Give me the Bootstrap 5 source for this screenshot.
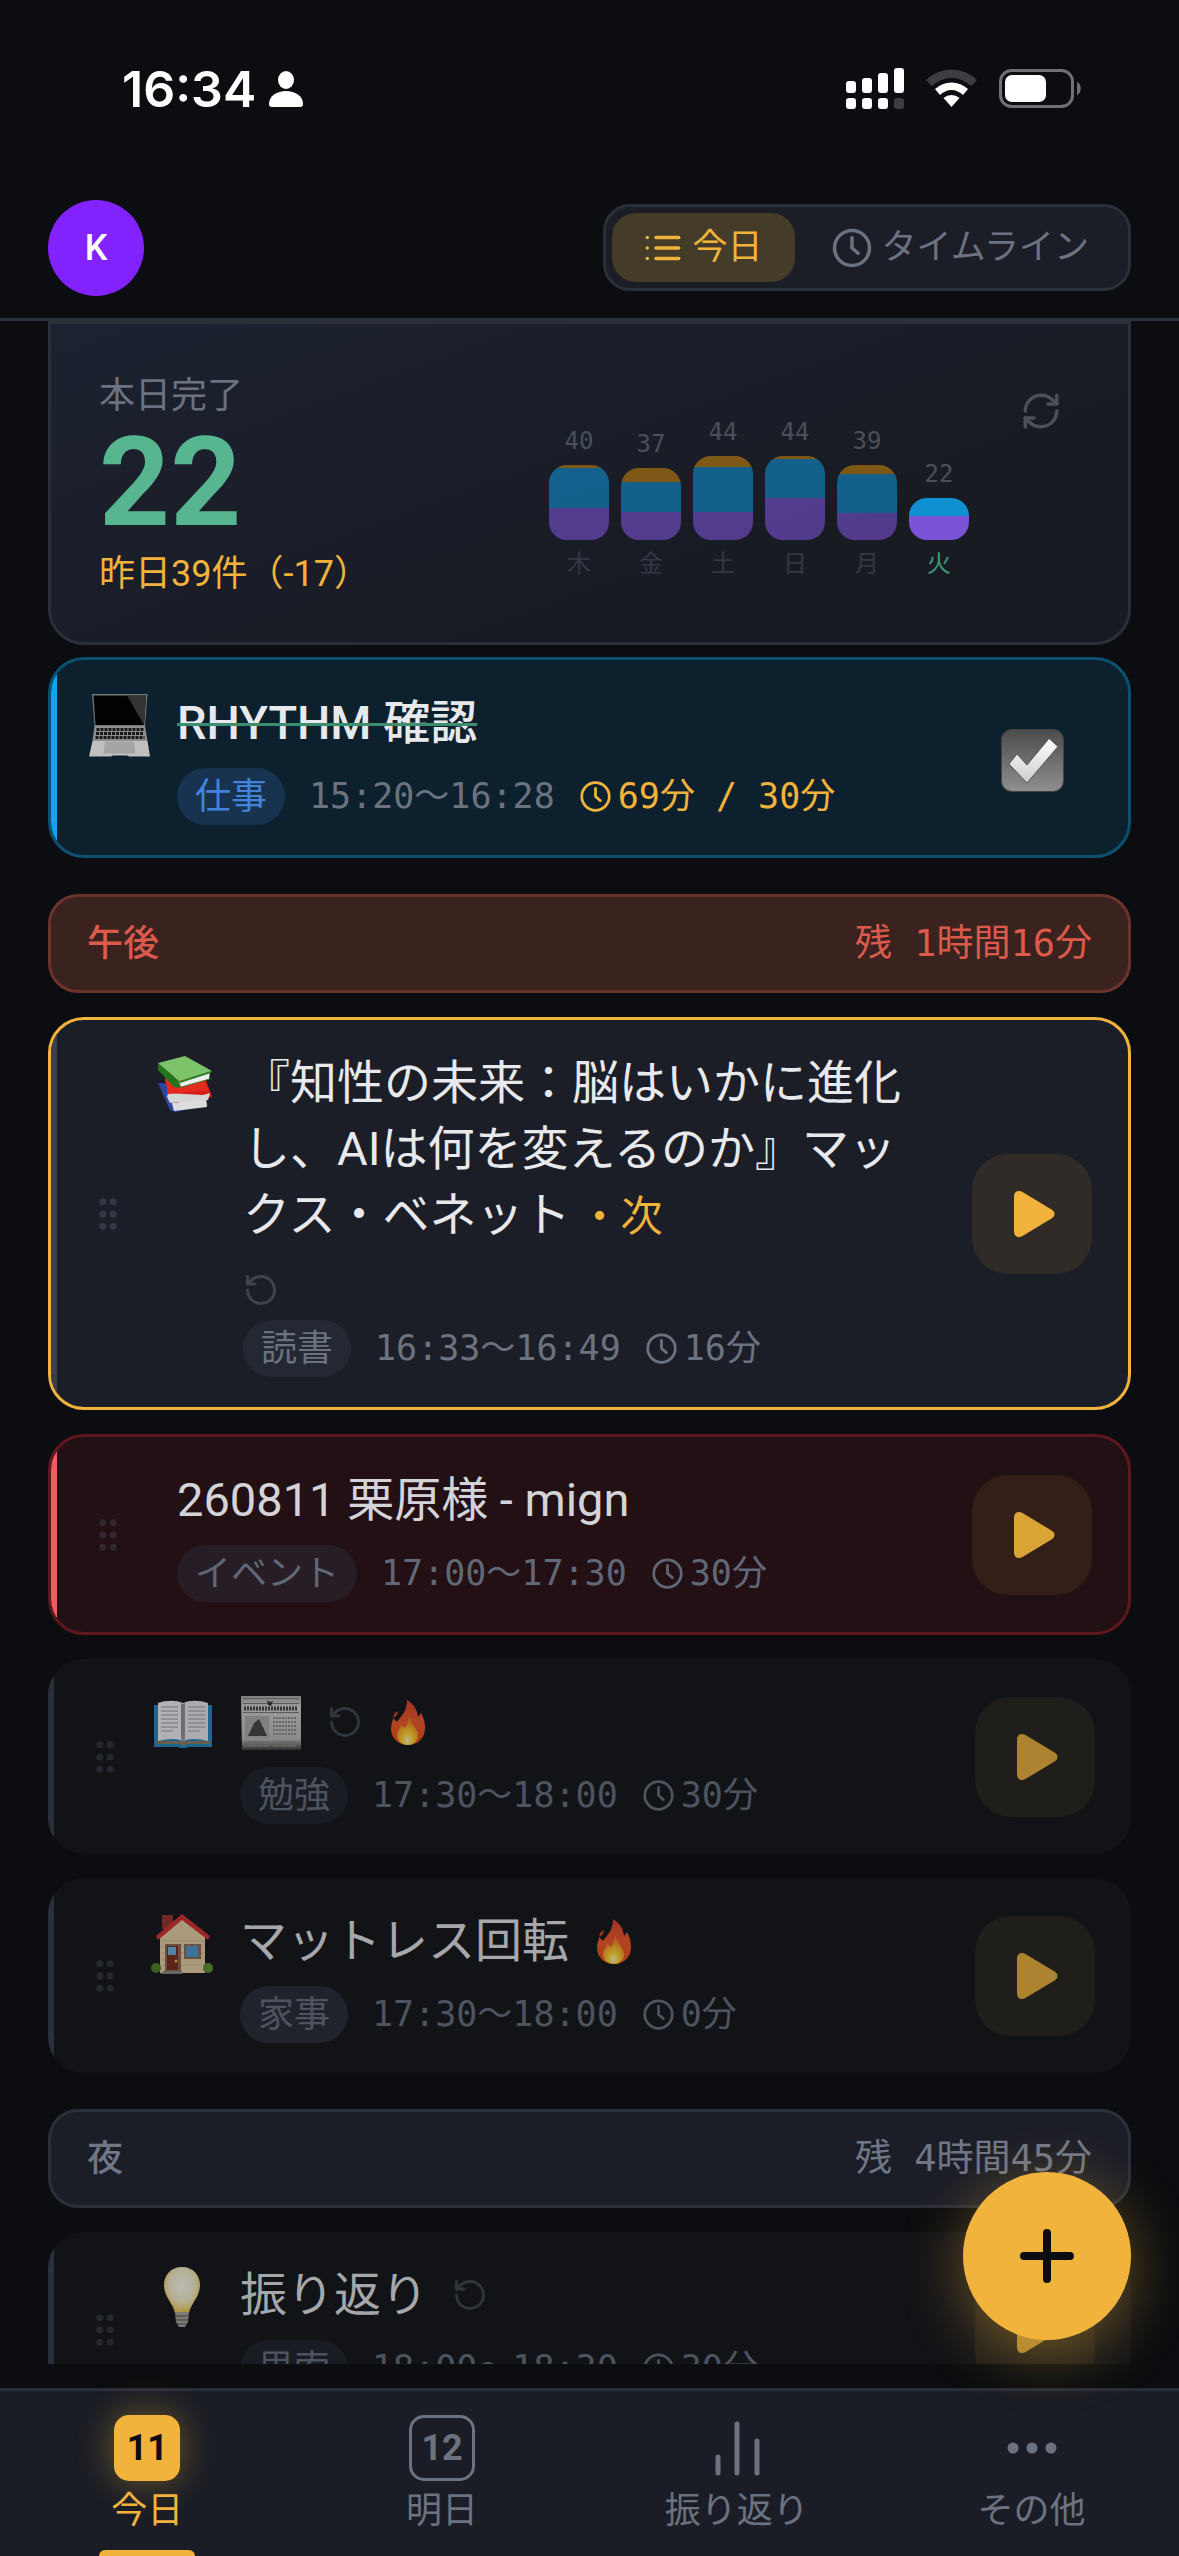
<!DOCTYPE html>
<html lang="ja">
<head>
<meta charset="utf-8">
<meta name="viewport" content="width=device-width, initial-scale=1">
<title>今日のタスク</title>
<link href="https://cdn.jsdelivr.net/npm/bootstrap@5.3.0/dist/css/bootstrap.min.css" rel="stylesheet">
<style>
:root{--ink:#e8e9ed;--muted:#6b7280;--amber:#f2b33d;--line:#2b2f3a;--panel:#1c1e27;--bg:#0b0d10}
body{background:var(--bg);color:var(--ink);font-family:Roboto,"Noto Sans CJK JP",sans-serif;font-size:36px;line-height:54px}
svg{display:block;flex:none;overflow:visible}
.ic{fill:none;stroke:currentColor;stroke-width:2;stroke-linecap:round;stroke-linejoin:round}
.i33{width:33px;height:33px}.i36{width:36px;height:36px}.i42{width:42px;height:42px}
.mono{font-family:"DejaVu Sans Mono","Noto Sans CJK JP",monospace}
.statusbar{height:177px;padding:0 98px 0 122px}
.clock{font-family:Inter,sans-serif;font-weight:600;font-size:50px;gap:12px}
.apphead{height:144px;padding:0 48px;border-bottom:3px solid var(--line)}
.avatar{width:96px;height:96px;background:#8122ff;color:#fff;font-weight:500;border:0}
.switcher{border:3px solid var(--line);border-radius:27px;background:var(--panel);padding:6px;gap:6px}
.switcher button{border:0;background:none;color:var(--muted);height:69px;padding:0 33px 0 30px;border-radius:24px;gap:8px;font-size:35px}
.switcher button.on{background:#453b29;color:var(--amber)}
.feed{padding:0 48px;margin-bottom:24px;min-height:0}
.stats{border:3px solid var(--line);border-radius:0 0 36px 36px;background:linear-gradient(160deg,#1c2230,#191b23 70%);padding:45px 48px 36px;margin-bottom:12px}
.caption-line{color:var(--muted)}
.total{font-size:124px;line-height:120px;font-weight:700;color:#57b58f}
.delta{color:var(--amber);line-height:63px}
.chart{gap:12px;padding-bottom:24px}
.daycol{width:60px;font-size:24px;line-height:36px;color:#4b4f5a;gap:6px}
.daycol .day{color:#343844}
.daycol.now .day{color:#3f9a77}
.stack{width:60px;border-radius:18px;overflow:hidden;opacity:.5}
.now .stack{opacity:.85}
.stack i{display:block}
.s1{background:#e29308}.s2{background:#0ea5f0}.s3{background:#8c5cf6}
.reload{border:0;background:none;padding:18px;color:#4b4f5a;margin:3px 0 0 33px}
.task{border:3px solid var(--line);border-radius:36px;background:var(--panel);padding:30px 36px;gap:24px;margin-bottom:24px;overflow:hidden;position:relative}
.task::before{content:"";position:absolute;left:0;top:0;bottom:0;width:6px;background:var(--bar)}
.grip{border:0;background:none;padding:0;color:#333845}
.emo{width:66px;height:66px}
.ttl{font-size:47px;line-height:66px;font-weight:400}
.headrow{column-gap:24px;row-gap:24px}
.meta{gap:24px;margin-top:12px;line-height:57px;font-size:35px;color:var(--muted)}
.tagchip{border-radius:29px;padding:0 18px;background:#242833;font-size:36px}
.dur{gap:6px}
.over{color:var(--amber)}
.strike{text-decoration:line-through 3px #3f8d6f}
.nxt{font-size:42px;line-height:42px;color:var(--amber)}
.again{color:#40434d}
.go{width:120px;height:120px;border:0;border-radius:36px;background:#302b27;color:var(--amber);margin-left:12px}
.done{border-color:#0c506f;background:#0d202d;--bar:#12a5ec}
.done .ttl{font-weight:500}
.done .tagchip{background:#17334f;color:#4283dc}
.done .go{background:none}
.next{border-color:var(--amber);--bar:#3a404c}
.alert-task{border-color:#5e171d;background:#221014;--bar:#f05b61}
.alert-task .ttl{color:#d4d4d8}
.alert-task .meta{color:#606776}.alert-task .tagchip{background:#271d24}
.alert-task .go{background:#341f18;color:#dba437}
.alert-task .grip{color:#332830}
.later{border:0;background:#121317;--bar:#2a2f39}
.later .emo,.later .fire{opacity:.72}
.later .ttl{color:#a6a7ab}
.later .meta{color:#4d535f}.later .tagchip{background:#191c23}.later .tagchip.home{background:#20232b}
.later .go{background:#201e1a;color:#ad8230}
.later .grip{color:#25282f}.later .again{color:#30343c}
.band{border:3px solid var(--line);border-radius:30px;background:var(--panel);color:#6f7686;padding:0 36px;height:99px;margin:36px 0 24px;font-weight:500}
.band .mono{font-size:37px;font-weight:400}
.band.hot{background:#3a221e;border-color:#6c332d;color:#db5a4c}
.fab{position:fixed;right:48px;bottom:216px;width:168px;height:168px;border:0;border-radius:50%;background:#f2b33d;color:var(--bg);box-shadow:0 12px 60px rgba(242,179,61,.4)}
.tabs{border-top:3px solid var(--line);background:#1a1d25;height:168px}
.tabs a{color:var(--muted);text-decoration:none;padding-top:24px;gap:6px;line-height:48px;position:relative}
.tabs a.on{color:var(--amber)}
.tabs a.on::after{content:"";position:absolute;bottom:0;width:96px;height:6px;border-radius:6px 6px 0 0;background:var(--amber)}
.datebox{width:66px;height:66px;border:3px solid currentColor;border-radius:15px;font-weight:700}
.on .datebox{background:var(--amber);box-shadow:0 0 36px rgba(242,179,61,.4)}
.on .datebox span{color:var(--bg)}
</style>
</head>
<body>
<svg width="0" height="0" class="position-absolute" aria-hidden="true">
<defs>
<linearGradient id="flame" x1="0" y1="0" x2="0" y2="1"><stop offset="0" stop-color="#d8402a"/><stop offset=".5" stop-color="#f0592a"/><stop offset="1" stop-color="#e8480f"/></linearGradient>
<radialGradient id="glow" cx=".5" cy=".85" r=".6"><stop offset="0" stop-color="#fff6c0"/><stop offset=".4" stop-color="#ffd52e"/><stop offset="1" stop-color="#f58a1f"/></radialGradient>
<linearGradient id="box" x1="0" y1="0" x2="0" y2="1"><stop offset="0" stop-color="#4c4c4c"/><stop offset="1" stop-color="#8f8f8f"/></linearGradient>
<linearGradient id="silver" x1="0" y1="0" x2="0" y2="1"><stop offset="0" stop-color="#fff"/><stop offset="1" stop-color="#ccc"/></linearGradient>
<linearGradient id="paper" x1="0" y1="0" x2="0" y2="1"><stop offset="0" stop-color="#a8a8a8"/><stop offset=".2" stop-color="#d2d2d2"/><stop offset=".8" stop-color="#b8b8b8"/><stop offset="1" stop-color="#3c3c3c"/></linearGradient>
<radialGradient id="bulb" cx=".5" cy=".4" r=".6"><stop offset="0" stop-color="#fdfcf0"/><stop offset=".6" stop-color="#f4ecc8"/><stop offset="1" stop-color="#f0c642"/></radialGradient>
<symbol id="clk" viewBox="0 0 24 24"><circle cx="12" cy="12" r="10"/><path d="M12 6v6l3.500 3"/></symbol>
<symbol id="grip" viewBox="0 0 24 24"><g fill="currentColor"><circle cx="9" cy="5" r="1"/><circle cx="9" cy="12" r="1"/><circle cx="9" cy="19" r="1"/><circle cx="15" cy="5" r="1"/><circle cx="15" cy="12" r="1"/><circle cx="15" cy="19" r="1"/></g></symbol>
<symbol id="loop" viewBox="0 0 24 24"><path d="M3 12a9 9 0 1 0 9-9 9.750 9.750 0 0 0-6.740 2.740L3 8"/><path d="M3 3v5h5"/></symbol>
<symbol id="play" viewBox="-4 0 46 48"><path d="M1 6.500C1 1.500 5.500-.5 9.500 2L38.500 19.500c4 2.500 4 6.500 0 9L9.500 46C5.500 48.500 1 46.500 1 41.500Z" fill="currentColor"/></symbol>
<symbol id="fire" viewBox="0 0 42 48"><path d="M20 2c8 5 10 10 11 17l3-4c3 5 4 10 4 15 0 10-7 17-17 17S4 40 4 31c0-5 2-8 2-11l4 4C14 18 20 14 20 2Z" fill="url(#flame)"/><path d="M11 13c-4 2-5 4-4 7l3-3Z" fill="#d8402a"/><path d="M22 17c0 8 8 12 9 19 1 6-4 11-10 11S9 43 10 36c1-5 4-5 4-9l4 3c3-4 4-8 4-13Z" fill="url(#glow)"/></symbol>
</defs>
</svg>

<div class="d-flex flex-column vh-100">
  <div class="statusbar d-flex align-items-center justify-content-between flex-shrink-0">
    <div class="clock d-flex align-items-center text-white"><span>16:34</span>
      <svg width="36" height="36" viewBox="0 0 36 36" fill="#fff"><ellipse cx="18" cy="9" rx="8" ry="9"/><path d="M1 33c0-8 8-13 17-13s17 5 17 13c0 2-1 3-3 3H4c-2 0-3-1-3-3Z"/></svg>
    </div>
    <svg width="235" height="42" viewBox="846 67 235 42" aria-label="電波・Wi-Fi・バッテリー">
      <g fill="#fff"><rect x="846" y="80" width="10" height="12" rx="3"/><rect x="862" y="77" width="10" height="15" rx="3"/><rect x="878" y="72" width="10" height="20" rx="3"/><rect x="894" y="67" width="10" height="25" rx="3"/><rect x="846" y="97" width="10" height="11" rx="3"/><rect x="862" y="97" width="10" height="11" rx="3"/><rect x="878" y="97" width="10" height="11" rx="3"/></g>
      <rect x="894" y="97" width="10" height="11" rx="3" fill="#3c3d41"/>
      <path d="M926 79a36 36 0 0 1 51 0l-6 6a28 28 0 0 0-39 0Z" fill="#3c3d41"/>
      <path d="M935 88a24 24 0 0 1 33 0l-5 6a16 16 0 0 0-23 0Z" fill="#fff"/><path d="M943.500 97a12 12 0 0 1 16 0l-8 9Z" fill="#fff"/>
      <rect x="1000.500" y="69.500" width="72" height="36" rx="11" fill="none" stroke="#707173" stroke-width="3"/><rect x="1005" y="74" width="41" height="27" rx="7" fill="#fff"/><path d="M1077 81c5 2 5 11 0 13Z" fill="#707173"/>
    </svg>
  </div>

  <header class="apphead d-flex align-items-center justify-content-between flex-shrink-0">
    <button type="button" class="avatar rounded-circle p-0">K</button>
    <div class="switcher d-flex" role="group">
      <button type="button" class="on d-flex align-items-center"><svg class="ic i42" viewBox="0 0 24 24"><path d="M8 6h13M8 12h13M8 18h13M3 6h.01M3 12h.01M3 18h.01"/></svg>今日</button>
      <button type="button" class="d-flex align-items-center"><svg class="ic i42"><use href="#clk"/></svg>タイムライン</button>
    </div>
  </header>

  <main class="feed flex-grow-1 overflow-hidden">
    <section class="stats d-flex align-items-start">
      <div class="me-auto">
        <div class="caption-line">本日完了</div>
        <div class="total">22</div>
        <div class="delta">昨日39件（-17）</div>
      </div>
      <div class="chart d-flex align-items-end align-self-end text-center">
        <div class="daycol d-flex flex-column mono"><span>40</span><div class="stack"><i class="s1" style="height:3px"></i><i class="s2" style="height:40px"></i><i class="s3" style="height:32px"></i></div><span class="day">木</span></div>
        <div class="daycol d-flex flex-column mono"><span>37</span><div class="stack"><i class="s1" style="height:14px"></i><i class="s2" style="height:30px"></i><i class="s3" style="height:28px"></i></div><span class="day">金</span></div>
        <div class="daycol d-flex flex-column mono"><span>44</span><div class="stack"><i class="s1" style="height:11px"></i><i class="s2" style="height:45px"></i><i class="s3" style="height:28px"></i></div><span class="day">土</span></div>
        <div class="daycol d-flex flex-column mono"><span>44</span><div class="stack"><i class="s1" style="height:3px"></i><i class="s2" style="height:39px"></i><i class="s3" style="height:42px"></i></div><span class="day">日</span></div>
        <div class="daycol d-flex flex-column mono"><span>39</span><div class="stack"><i class="s1" style="height:9px"></i><i class="s2" style="height:39px"></i><i class="s3" style="height:27px"></i></div><span class="day">月</span></div>
        <div class="daycol now d-flex flex-column mono"><span>22</span><div class="stack"><i class="s2" style="height:18px"></i><i class="s3" style="height:24px"></i></div><span class="day">火</span></div>
      </div>
      <button type="button" class="reload" aria-label="更新"><svg class="ic i42" viewBox="0 0 24 24"><path d="M3 12a9 9 0 0 1 9-9 9.750 9.750 0 0 1 6.740 2.740L21 8"/><path d="M21 3v5h-5"/><path d="M21 12a9 9 0 0 1-9 9 9.750 9.750 0 0 1-6.740-2.740L3 16"/><path d="M8 16H3v5"/></svg></button>
    </section>

    <article class="task done d-flex align-items-center">
      <svg class="emo align-self-start" viewBox="0 0 66 66"><path d="M5 4h55.500L58 36H7.500Z" fill="#777"/><path d="M6.500 5.500h52.500L57 35H8.500Z" fill="#020202"/><path d="M40 5.500h19L57 35Z" fill="#333"/><path d="M7.500 36h50.500l2.500 15h-55Z" fill="#8d8d8d"/><path d="M9.500 39.500h47M9 43.500h48M8.500 47.500h49" stroke="#181818" stroke-width="3" stroke-dasharray="3 1"/><path d="M5.500 51h55l2.500 15.500H42l-2-1H26l-2 1H2Z" fill="#c0c0c0"/><path d="M18 51.500h29l1.500 12H16.500Z" fill="#a5a5a5"/></svg>
      <div class="flex-grow-1">
        <div class="ttl"><span class="strike">RHYTHM 確認</span></div>
        <div class="meta mono d-flex"><span class="tagchip">仕事</span><span>15:20〜16:28</span><span class="dur over d-flex align-items-center"><svg class="ic i33"><use href="#clk"/></svg>69分 / 30分</span></div>
      </div>
      <button type="button" class="go d-flex align-items-center justify-content-center p-0" aria-label="完了済み"><svg width="63" height="69" viewBox="0 -6 63 69"><rect width="63" height="63" rx="11" fill="#444"/><rect x="1" y="1" width="61" height="61" rx="10" fill="url(#box)"/><path d="M8 35l8-10 10 11L48 9.500l9 8L26 54Z" fill="url(#silver)" stroke="#555" stroke-width="1"/></svg></button>
    </article>

    <div class="band hot d-flex align-items-center justify-content-between"><span>午後</span><span class="mono">残 1時間16分</span></div>

    <article class="task next d-flex align-items-center">
      <button type="button" class="grip" aria-label="並べ替え"><svg class="ic i42"><use href="#grip"/></svg></button>
      <svg class="emo align-self-start" viewBox="0 0 66 66"><path d="M5 33l12 27 5 2 33-7-9-20Z" fill="#2b479f"/><path d="M19 53l34-5 1 9-33 4Z" fill="#ddd"/><path d="M12 30l8 20 2 3 37-6-6-17Z" fill="#d41c15"/><path d="M14 47l1-4 35 2 7-2-2 7-38 3Z" fill="#d6d6d6"/><path d="M12 28l3 16 41-3-7-14Z" fill="#e32a1f"/><path d="M5 13l21 18 1 7-6-1L5 20Z" fill="#23761b"/><path d="M5 13L32 6l27 15-33 10Z" fill="#7cc369"/><path d="M26 31l31-9-1 7-28 8Z" fill="#eee"/><path d="M26 31l33-10-1 2-31 10ZM27 37l32-9-1 1-31 9Z" fill="#2b7d22"/></svg>
      <div class="flex-grow-1" style="flex-basis:0">
        <div class="headrow d-flex flex-wrap align-items-center"><div class="ttl">『知性の未来：脳はいかに進化し、AIは何を変えるのか』マックス・ベネット<span class="nxt ms-2">・次</span></div><svg class="ic i36 again"><use href="#loop"/></svg></div>
        <div class="meta mono d-flex"><span class="tagchip">読書</span><span>16:33〜16:49</span><span class="dur d-flex align-items-center"><svg class="ic i33"><use href="#clk"/></svg>16分</span></div>
      </div>
      <button type="button" class="go d-flex align-items-center justify-content-center p-0" aria-label="開始"><svg width="46" height="48"><use href="#play"/></svg></button>
    </article>

    <article class="task alert-task d-flex align-items-center">
      <button type="button" class="grip" aria-label="並べ替え"><svg class="ic i42"><use href="#grip"/></svg></button>
      <div class="flex-grow-1 ms-4">
        <div class="ttl">260811 栗原様 - mign</div>
        <div class="meta mono d-flex"><span class="tagchip">イベント</span><span>17:00〜17:30</span><span class="dur d-flex align-items-center"><svg class="ic i33"><use href="#clk"/></svg>30分</span></div>
      </div>
      <button type="button" class="go d-flex align-items-center justify-content-center p-0" aria-label="開始"><svg width="46" height="48"><use href="#play"/></svg></button>
    </article>

    <article class="task later d-flex align-items-center">
      <button type="button" class="grip" aria-label="並べ替え"><svg class="ic i42"><use href="#grip"/></svg></button>
      <svg class="emo align-self-start" viewBox="0 0 66 66"><path d="M4 16h58v42H38l-2 1h-6l-2-1H4Z" fill="#2687bd"/><path d="M7 52h53v3H36l-3 2-3-2H7Z" fill="#8d7b5c"/><path d="M8 14c9-3 18-3 25 0v38c-8-3-16-2-25 0Z" fill="#f0f0f4"/><path d="M33 14c7-3 16-3 25 0v38c-9-2-17-3-25 0Z" fill="#e6e6ec"/><path d="M31 14l2 1 2-1v36l-2 2-2-2Z" fill="#8f9096"/><path d="M11 18h17M11 22h17M11 26h17M11 30h17M11 34h17M11 38h17M11 42h12M38 18h17M38 22h17M38 26h17M38 30h17M38 34h17M38 38h17M38 42h12" stroke="#b4b5bd" stroke-width="1.500"/></svg>
      <div class="flex-grow-1">
        <div class="headrow d-flex align-items-center">
          <svg width="63" height="66" viewBox="0 0 63 66" opacity=".72"><path d="M1 7h60v54H2Z" fill="url(#paper)"/><path d="M3 9.500h56M3 14.500h56M3 23.500h56" stroke="#777" stroke-width="1"/><path d="M27 11l3 2 3-1-2 5-3-1Z" fill="#333"/><path d="M4 19.500h54" stroke="#444" stroke-width="4" stroke-dasharray="2 1"/><rect x="5" y="27" width="24" height="22" fill="#aaa"/><path d="M8 47l6-13 5-4 3 6 5 11Z" fill="#444"/><path d="M33 29h24M33 33h24M33 37h24M33 41h24M33 45h24M5 53h24M33 53h24M5 57h24M33 57h24" stroke="#888" stroke-width="2" stroke-dasharray="2 1"/></svg>
          <svg class="ic i36 again"><use href="#loop"/></svg><svg class="fire" width="42" height="48"><use href="#fire"/></svg>
        </div>
        <div class="meta mono d-flex"><span class="tagchip">勉強</span><span>17:30〜18:00</span><span class="dur d-flex align-items-center"><svg class="ic i33"><use href="#clk"/></svg>30分</span></div>
      </div>
      <button type="button" class="go d-flex align-items-center justify-content-center p-0" aria-label="開始"><svg width="46" height="48"><use href="#play"/></svg></button>
    </article>

    <article class="task later d-flex align-items-center">
      <button type="button" class="grip" aria-label="並べ替え"><svg class="ic i42"><use href="#grip"/></svg></button>
      <svg class="emo align-self-start" viewBox="-2 0 66 66"><path d="M10 7h11v14H10Z" fill="#97302a"/><path d="M8 27L31 9l22 18v38H8Z" fill="#e6d0a4"/><path d="M8 33h45M8 39h45M8 45h45M8 51h45M8 57h45" stroke="#d4bd90" stroke-width="1"/><path d="M4 28L30 6l28 22-2 4L30 12 6 32Z" fill="#d0302d"/><rect x="13" y="36" width="16" height="28" fill="#8a6a50"/><rect x="15" y="38" width="11" height="24" fill="#7a2b1c"/><rect x="16" y="39" width="8" height="8" fill="#68b3da"/><circle cx="24" cy="53" r="1.500" fill="#e8b93c"/><rect x="32" y="36" width="17" height="15" fill="#8a6a50"/><rect x="34" y="38" width="12" height="11" fill="#4e98cc"/><circle cx="4" cy="60" r="5" fill="#4d7d25"/><circle cx="56" cy="60" r="5" fill="#5b8f2c"/><path d="M11 63h19v3H9Z" fill="#8b8780"/></svg>
      <div class="flex-grow-1">
        <div class="headrow d-flex align-items-center"><div class="ttl">マットレス回転</div><svg class="fire" width="42" height="48"><use href="#fire"/></svg></div>
        <div class="meta mono d-flex"><span class="tagchip home">家事</span><span>17:30〜18:00</span><span class="dur d-flex align-items-center"><svg class="ic i33"><use href="#clk"/></svg>0分</span></div>
      </div>
      <button type="button" class="go d-flex align-items-center justify-content-center p-0" aria-label="開始"><svg width="46" height="48"><use href="#play"/></svg></button>
    </article>

    <div class="band d-flex align-items-center justify-content-between"><span>夜</span><span class="mono">残 4時間45分</span></div>

    <article class="task later d-flex align-items-center">
      <button type="button" class="grip" aria-label="並べ替え"><svg class="ic i42"><use href="#grip"/></svg></button>
      <svg class="emo align-self-start" viewBox="-2 0 66 66"><path d="M30 5c11 0 18 8 18 18 0 12-9 18-11 28H23c-2-10-11-16-11-28C12 13 19 5 30 5Z" fill="url(#bulb)"/><path d="M23 50h14l-1 10-3 5h-6l-3-5Z" fill="#a8a39c"/><path d="M23 54h14M24 58h12M25 62h10" stroke="#6f6b66" stroke-width="1.500"/></svg>
      <div class="flex-grow-1">
        <div class="headrow d-flex align-items-center"><div class="ttl">振り返り</div><svg class="ic i36 again"><use href="#loop"/></svg></div>
        <div class="meta mono d-flex"><span class="tagchip">思索</span><span>18:00〜18:30</span><span class="dur d-flex align-items-center"><svg class="ic i33"><use href="#clk"/></svg>30分</span></div>
      </div>
      <button type="button" class="go d-flex align-items-center justify-content-center p-0" aria-label="開始"><svg width="46" height="48"><use href="#play"/></svg></button>
    </article>
  </main>

  <nav class="tabs row g-0 flex-shrink-0">
    <a href="#" class="on col d-flex flex-column align-items-center"><span class="datebox d-flex align-items-center justify-content-center"><span>11</span></span>今日</a>
    <a href="#" class="col d-flex flex-column align-items-center"><span class="datebox d-flex align-items-center justify-content-center"><span>12</span></span>明日</a>
    <a href="#" class="col d-flex flex-column align-items-center"><svg width="66" height="66" viewBox="0 0 66 66" fill="none" stroke="currentColor" stroke-width="5" stroke-linecap="round"><path d="M14 58V42M33 58V9M53 58V26"/></svg>振り返り</a>
    <a href="#" class="col d-flex flex-column align-items-center"><svg width="66" height="66" viewBox="0 0 66 66" fill="currentColor"><circle cx="14" cy="33" r="5.500"/><circle cx="33" cy="33" r="5.500"/><circle cx="52" cy="33" r="5.500"/></svg>その他</a>
  </nav>
</div>
<button type="button" class="fab d-flex align-items-center justify-content-center p-0" aria-label="追加"><svg width="54" height="54" viewBox="0 0 54 54" fill="none" stroke="currentColor" stroke-width="8" stroke-linecap="round"><path d="M27 4v46M4 27h46"/></svg></button>
<script src="https://cdn.jsdelivr.net/npm/bootstrap@5.3.0/dist/js/bootstrap.bundle.min.js"></script>
</body>
</html>
